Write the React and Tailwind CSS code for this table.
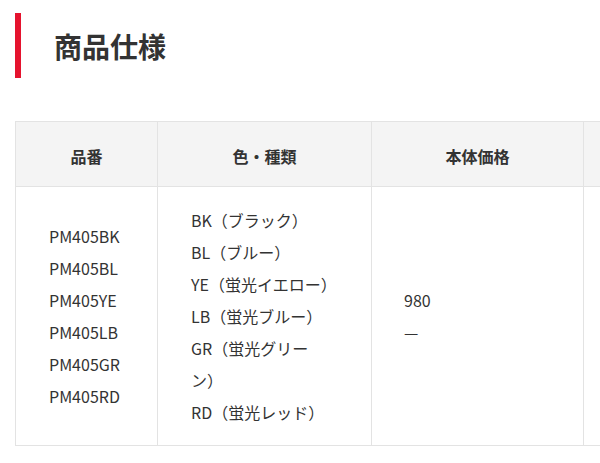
import React from 'react';

const codes = ['PM405BK', 'PM405BL', 'PM405YE', 'PM405LB', 'PM405GR', 'PM405RD'];
const colors = ['BK（ブラック）', 'BL（ブルー）', 'YE（蛍光イエロー）', 'LB（蛍光ブルー）', 'GR（蛍光グリーン）', 'RD（蛍光レッド）'];

const App = () => {
    return (
        <div className="w-[600px] h-[463px] overflow-hidden bg-white text-[#333] font-['Noto_Sans_CJK_JP',sans-serif]">
            <div className="pl-[15px] pt-[13px]">
                <div className="border-l-[6px] border-[#e5132e] h-[65px] flex items-center pl-[33px]">
                    <h2 className="text-[28px] font-bold leading-none">商品仕様</h2>
                </div>
            </div>
            <div className="mt-[43px] ml-[15px] w-[800px]">
                <table className="table-fixed border-collapse w-[800px] text-[16px]">
                    <colgroup>
                        <col className="w-[142px]" />
                        <col className="w-[214px]" />
                        <col className="w-[212px]" />
                        <col />
                    </colgroup>
                    <thead>
                        <tr className="bg-[#f4f4f4]">
                            <th className="border border-[#e3e3e3] h-[65px] font-bold pt-[3px]">品番</th>
                            <th className="border border-[#e3e3e3] h-[65px] font-bold pt-[3px]">色・種類</th>
                            <th className="border border-[#e3e3e3] h-[65px] font-bold pt-[3px]">本体価格</th>
                            <th className="border border-[#e3e3e3] h-[65px] font-bold pt-[3px]"></th>
                        </tr>
                    </thead>
                    <tbody>
                        <tr>
                            <td className="border border-[#e3e3e3] align-middle pl-[33px] pr-[20px] py-[17px] leading-[32px]">
                                {codes.map((c) => (
                                    <div key={c}>{c}</div>
                                ))}
                            </td>
                            <td className="border border-[#e3e3e3] align-middle pl-[33px] pr-[41px] py-[17px] leading-[32px]">
                                {colors.map((c) => (
                                    <div key={c}>{c}</div>
                                ))}
                            </td>
                            <td className="border border-[#e3e3e3] align-middle pl-[32px] pr-[32px] py-[17px] leading-[32px]">
                                <div>980</div>
                                <div>—</div>
                            </td>
                            <td className="border border-[#e3e3e3] align-middle px-[32px] py-[17px] leading-[32px]"></td>
                        </tr>
                    </tbody>
                </table>
            </div>
        </div>
    );
};

export default App;
